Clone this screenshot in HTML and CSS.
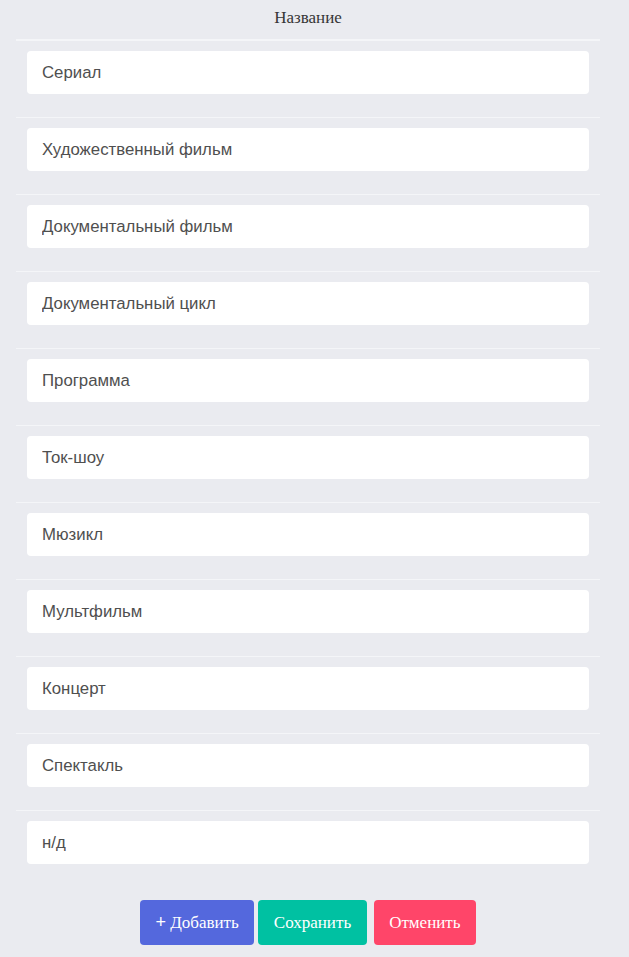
FILE: index.html
```html
<!DOCTYPE html>
<html lang="ru">
<head>
<meta charset="utf-8">
<link rel="stylesheet" href="styles.css">
</head>
<body>
<div class="page">
  <table class="list">
    <thead>
      <tr><th>Название</th></tr>
    </thead>
    <tbody>
      <tr><td><input class="field" type="text" value="Сериал"></td></tr>
      <tr><td><input class="field" type="text" value="Художественный фильм"></td></tr>
      <tr><td><input class="field" type="text" value="Документальный фильм"></td></tr>
      <tr><td><input class="field" type="text" value="Документальный цикл"></td></tr>
      <tr><td><input class="field" type="text" value="Программа"></td></tr>
      <tr><td><input class="field" type="text" value="Ток-шоу"></td></tr>
      <tr><td><input class="field" type="text" value="Мюзикл"></td></tr>
      <tr><td><input class="field" type="text" value="Мультфильм"></td></tr>
      <tr><td><input class="field" type="text" value="Концерт"></td></tr>
      <tr><td><input class="field" type="text" value="Спектакль"></td></tr>
      <tr><td><input class="field" type="text" value="н/д"></td></tr>
    </tbody>
  </table>
  <div class="actions">
    <button class="btn btn-add"><span class="plus">+</span> Добавить</button>
    <button class="btn btn-save">Сохранить</button>
    <button class="btn btn-cancel">Отменить</button>
  </div>
</div>
</body>
</html>
```

FILE: styles.css
```css
html, body {
  margin: 0;
  padding: 0;
  background: #eaebf0;
}
body {
  font-family: "Liberation Serif", serif;
}
.page {
  width: 584px;
  padding: 0 0 0 16px;
}
.list {
  width: 584px;
  border-collapse: collapse;
}
.list th {
  font-family: "Liberation Serif", serif;
  font-weight: normal;
  font-size: 17px;
  color: #363636;
  text-align: center;
  height: 39px;
  padding: 0;
  border-bottom: 2px solid #f4f5f8;
  vertical-align: top;
  line-height: 35px;
}
.list td {
  padding: 10px 11px 23px 11px;
  border-bottom: 1px solid #f4f5f8;
}
.list tbody tr:last-child td {
  border-bottom: none;
}
.field {
  display: block;
  box-sizing: border-box;
  width: 100%;
  height: 43px;
  border: none;
  border-radius: 4px;
  background: #ffffff;
  padding: 0 15px;
  font-family: "Liberation Sans", Arial, sans-serif;
  font-size: 16.8px;
  color: #4f4f4f;
  outline: none;
}
.actions {
  display: flex;
  justify-content: center;
  gap: 4px;
  padding: 13px 0 12px 0;
}
.btn {
  height: 45px;
  border: none;
  border-radius: 4px;
  color: #ffffff;
  font-family: "Liberation Serif", serif;
  font-size: 17px;
  padding: 0 15.5px;
  cursor: pointer;
}
.plus {
  font-family: "Liberation Sans", sans-serif;
  font-size: 18px;
}
.btn-add { background: #5468dd; }
.btn-save { background: #00c1a2; }
.btn-cancel { background: #ff4569; margin-left: 3px; }
```
